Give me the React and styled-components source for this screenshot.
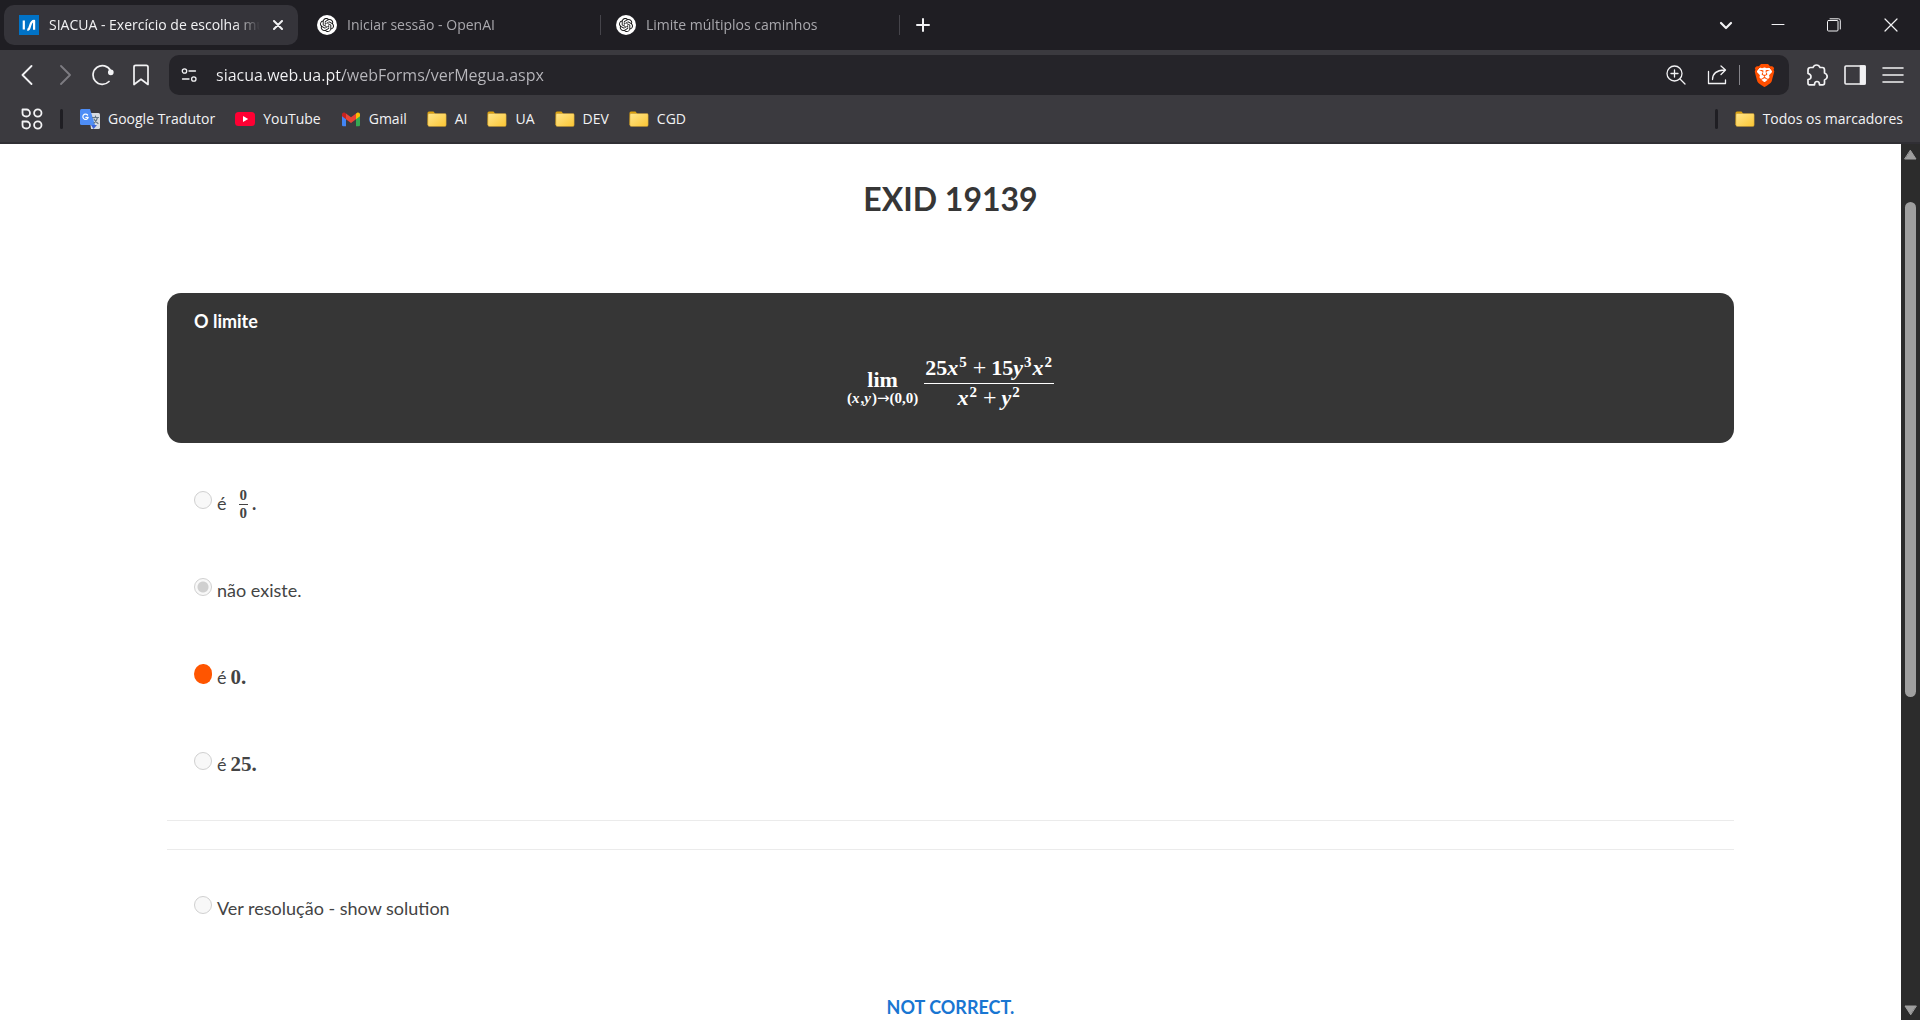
import React from "react";
import styled, { createGlobalStyle, css } from "styled-components";
import { SiOpenai, SiBrave } from "react-icons/si";

const GlobalStyle = createGlobalStyle`
  *, *::before, *::after { box-sizing: border-box; }
  html, body { margin: 0; background: #fff; }
  button { border: 0; padding: 0; background: none; color: inherit; font: inherit; }
  svg { display: block; flex: none; }
`;

const ui = `"Open Sans", "Noto Sans", sans-serif`;
const body = `"Lato", "Open Sans", sans-serif`;
const serif = `"Liberation Serif", "DejaVu Serif", serif`;

const Browser = styled.div`
  display: flex;
  flex-direction: column;
  height: 100vh;
  overflow: hidden;
  font-family: ${ui};
  font-size: 14px;
  color: #f2f2f4;
`;

/* Tab strip */
const TabStrip = styled.header`
  display: flex;
  align-items: center;
  flex: none;
  height: 50px;
  padding-left: 4px;
  background: #1f1e23;
`;
const Tab = styled.div`
  display: flex;
  align-items: center;
  gap: 10px;
  height: 40px;
  width: 299px;
  padding: 0 14px 0 15px;
  color: #a9a8ad;
  ${(p) =>
    p.$active &&
    css`
      width: 294px;
      margin-right: 4px;
      padding-right: 12px;
      background: #35343a;
      border-radius: 10px;
      color: #f2f2f4;
    `}
`;
const TabTitle = styled.span`
  flex: 1;
  min-width: 0;
  overflow: hidden;
  white-space: nowrap;
  padding-bottom: 2px;
  mask-image: linear-gradient(to right, #000 calc(100% - 26px), transparent);
`;
const TabDivider = styled.span`
  width: 1px;
  height: 20px;
  margin-left: -1px;
  background: #45444a;
`;
const Favicon = styled.span`
  display: grid;
  place-items: center;
  flex: none;
  width: 20px;
  height: 20px;
  border-radius: 50%;
  background: #fff;
  color: #111;
`;
const PlainButton = styled.button`
  display: grid;
  place-items: center;
  flex: none;
  width: ${(p) => p.$w || 38}px;
  height: 36px;
  color: ${(p) => (p.$dim ? "#7d7c82" : "#f2f2f4")};
`;
const WindowControls = styled.div`
  display: flex;
  margin-left: auto;
`;

/* Toolbar */
const Toolbar = styled.nav`
  display: flex;
  align-items: center;
  flex: none;
  height: 50px;
  padding: 0 8px;
  background: #3b3a3f;
`;
const AddressBar = styled.div`
  display: flex;
  align-items: center;
  flex: 1;
  height: 40px;
  margin: 0 9px;
  padding: 0 14px 0 8px;
  background: #252429;
  border-radius: 10px;
`;
const UrlInput = styled.input`
  flex: 1;
  min-width: 0;
  height: 28px;
  margin-left: 15px;
  padding: 0;
  border: 0;
  outline: 0;
  font-family: ${ui};
  font-size: 16px;
  color: transparent;
  background: linear-gradient(to right, #f4f4f6 127px, #b9b8bd 127px);
  background-clip: text;
`;
const BarDivider = styled.span`
  width: 1px;
  height: 20px;
  margin: 0 13px 0 6px;
  background: #85848a;
`;

/* Bookmarks */
const Bookmarks = styled.nav`
  display: flex;
  align-items: center;
  gap: 20px;
  flex: none;
  height: 44px;
  padding: 0 17px 5px 13px;
  background: #3b3a3f;
  border-bottom: 2px solid #302f34;
`;
const Bookmark = styled.a`
  display: flex;
  align-items: center;
  gap: 8px;
  color: #f2f2f4;
  text-decoration: none;
  white-space: nowrap;
`;
const BookmarkDivider = styled.span`
  width: 3px;
  height: 20px;
  margin-right: -3px;
  margin-left: ${(p) => (p.$end ? "auto" : "-11px")};
  border-radius: 2px;
  background: #1f1e23;
`;

/* Page */
const Viewport = styled.div`
  display: flex;
  flex: 1;
  min-height: 0;
  background: #fff;
`;
const Page = styled.main`
  flex: 1;
  min-width: 0;
  overflow: hidden;
  padding: 35px 167px 0;
  font-family: ${body};
  font-size: 18px;
  line-height: 24px;
  color: #444;
`;
const Heading = styled.h1`
  margin: 0 0 74px;
  text-align: center;
  font-size: 32px;
  line-height: 40px;
  font-weight: 700;
  color: #363636;
`;
const Card = styled.section`
  padding: 16px 27px 31px;
  border-radius: 14px;
  background: #363636;
  color: #fff;
  p { margin: 0; }
`;
const Formula = styled.div`
  display: flex;
  justify-content: center;
  gap: 6px;
  margin-top: 21px;
  font-family: ${serif};
  font-size: 22px;
`;
const Limit = styled.div`
  display: flex;
  flex-direction: column;
  align-items: center;
  padding-top: 14px;
  line-height: 24px;
`;
const Under = styled.span`
  display: flex;
  font-size: 15px;
  line-height: 12px;
  font-weight: 700;
  i { margin-right: 1px; }
`;
const Fraction = styled.div`
  display: flex;
  flex-direction: column;
  text-align: center;
  line-height: 28px;
  sup { font-size: 15px; line-height: 0; font-weight: 700; vertical-align: 8px; margin: 0 1px; }
  i { font-weight: 700; }
`;
const Operator = styled.span`
  margin: 0 5px;
  font-size: 24px;
  line-height: 0;
`;
const Arrow = styled.span`
  font-family: "DejaVu Sans", sans-serif;
  font-weight: 400;
`;
const Numerator = styled.div`
  padding: 0 1px;
  border-bottom: 1px solid currentColor;
  height: 30px;
`;
const Options = styled.div`
  padding: 16px 0 13px 27px;
`;
const Option = styled.div`
  display: flex;
  align-items: center;
  gap: 5px;
  height: 87px;
`;
const OptionLabel = styled.label`
  display: flex;
  align-items: center;
  gap: 4px;
`;
const Radio = styled.input`
  appearance: none;
  flex: none;
  width: 18px;
  height: 18px;
  margin: 0 0 5px;
  border: 1px solid #d0d0d0;
  border-radius: 50%;
  background: #f8f8f8;
  &:checked {
    background: radial-gradient(circle, #d0d0d0 5px, #f8f8f8 6px);
  }
  ${(p) =>
    p.$marked &&
    css`
      height: 20px;
      border: 0;
      border-radius: 50% 46% 45% 50%;
      background: #ff5500;
    `}
`;
const Num = styled.span`
  font-family: ${serif};
  font-size: 21px;
`;
const SmallFraction = styled.span`
  display: inline-grid;
  margin-left: 8px;
  padding-top: 4px;
  text-align: center;
  font-family: ${serif};
  font-weight: 700;
  font-size: 15px;
  line-height: 17px;
  span { padding: 0 1px; }
  span + span { border-top: 1px solid currentColor; }
`;
const Rule = styled.hr`
  height: 1px;
  margin: 0 0 28px;
  border: 0;
  background: #ebebeb;
`;
const Solution = styled.div`
  padding: 0 0 0 27px;
  margin-top: -14px;
`;
const Verdict = styled.p`
  margin: 46px 0 0;
  text-align: center;
  font-weight: 700;
  line-height: 20px;
  color: #1976d2;
`;

/* Scrollbar */
const Scrollbar = styled.div`
  display: flex;
  flex-direction: column;
  align-items: center;
  flex: none;
  width: 19px;
  padding: 5px 0 4px;
  background: #2c2c2c;
`;
const Track = styled.div`
  flex: 1;
  width: 11px;
  padding-top: 42px;
`;
const Thumb = styled.div`
  height: 61.6%;
  border-radius: 6px;
  background: #9f9f9f;
`;

const Svg = ({ w = 20, h, children, sw = 1.5, vb }) => (
  <svg width={w} height={h || w} viewBox={vb || `0 0 ${w} ${h || w}`} fill="none" stroke="currentColor" strokeWidth={sw} strokeLinecap="round" strokeLinejoin="round" aria-hidden="true">
    {children}
  </svg>
);

const SiteIcon = () => (
  <Svg w={20} sw={2.2}>
    <path d="M0 0h20v20H0z" fill="#0072c6" stroke="none" />
    <path d="M4.800 5.500v9M8.300 14.800c1.700 0 2-1 2.900-4.300s1.600-4.700 3.900-4.700v9" stroke="#fff" strokeLinecap="butt" />
  </Svg>
);
const FolderIcon = () => (
  <Svg w={20} sw={1}>
    <defs>
      <linearGradient id="folder" x1="0" y1="0" x2="1" y2="1">
        <stop offset="0" stopColor="#ffe68c" />
        <stop offset="1" stopColor="#fbc533" />
      </linearGradient>
    </defs>
    <path d="M.5 4Q.5 2.500 2 2.500h4.500L8.500 5H18v11H.5z" fill="#dda20d" stroke="none" />
    <path d="M1 5.500Q1 4.500 2 4.500h16q1.200 0 1.200 1.200V16q0 1.500-1.500 1.500h-15Q.8 17.500.8 16z" fill="url(#folder)" stroke="#b88a2a" strokeWidth=".4" />
  </Svg>
);
const TranslateIcon = () => (
  <Svg w={20} sw={1.2}>
    <path d="M9 4h9.500q1.500 0 1.500 1.500V18.500q0 1.500-1.500 1.500H11z" fill="#d7dbe0" stroke="none" />
    <path d="M11 16l2.500 4L17 16z" fill="#3a62d7" stroke="none" />
    <path d="M0 1.500Q0 0 1.500 0H10l5 16H1.500Q0 16 0 14.500z" fill="#4e8df6" stroke="none" />
    <path d="M7.600 6A2.700 2.700 0 1 0 8.200 8.300H5.800" stroke="#fff" />
    <path d="M12.500 8.500h6M15.500 7v1.500M17.500 8.500q-.8 3.500-3.500 5.500M14 10q1.500 3 4 4.500" stroke="#657786" />
  </Svg>
);
const YoutubeIcon = () => (
  <Svg w={20}>
    <rect y="3" width="20" height="14" rx="3.500" fill="#ff0033" stroke="none" />
    <path d="M8 7l5.200 3L8 13z" fill="#fff" stroke="none" />
  </Svg>
);
const GmailIcon = () => (
  <Svg w={20}>
    <g stroke="none">
      <path d="M1 5v11q0 1.300 1.300 1.300H5V8z" fill="#4285f4" />
      <path d="M19 5v11q0 1.300-1.300 1.300H15V8z" fill="#34a853" />
      <path d="M15 4.500l.8-.6C17.200 2.800 19 3.700 19 5.500V7.200l-4 3z" fill="#fbbc04" />
      <path d="M5 4.500l-.8-.6C2.800 2.800 1 3.700 1 5.500V7.200l4 3z" fill="#c5221f" />
      <path d="M5 4.500l5 3.800 5-3.800v5.700L10 14l-5-3.800z" fill="#ea4335" />
    </g>
  </Svg>
);
const BraveBadge = styled.span`
  display: grid;
  place-items: center;
  color: #ff4f00;
  background: radial-gradient(circle at 50% 45%, #fff 8px, transparent 8px);
`;
const BraveIcon = () => (
  <BraveBadge><SiBrave size={23} /></BraveBadge>
);

const links = [
  ["Google Tradutor", TranslateIcon],
  ["YouTube", YoutubeIcon],
  ["Gmail", GmailIcon],
  ["AI", FolderIcon],
  ["UA", FolderIcon],
  ["DEV", FolderIcon],
  ["CGD", FolderIcon],
];

const options = [
  {
    id: "a",
    label: (
      <>
        é
        <SmallFraction>
          <span>0</span>
          <span>0</span>
        </SmallFraction>
        <b>.</b>
      </>
    ),
  },
  { id: "b", label: "não existe.", checked: true },
  { id: "c", label: <>é <Num><b>0.</b></Num></>, marked: true },
  { id: "d", label: <>é <Num><b>25.</b></Num></> },
];

function Choice({ id, label, checked, marked }) {
  return (
    <Option>
      <Radio type="radio" name="answer" id={id} defaultChecked={checked} $marked={marked} />
      <OptionLabel htmlFor={id}>{label}</OptionLabel>
    </Option>
  );
}

export default function App() {
  return (
    <Browser>
      <GlobalStyle />
      <TabStrip>
        <Tab $active>
          <SiteIcon />
          <TabTitle>SIACUA - Exercício de escolha múltipla</TabTitle>
          <PlainButton $w={16} aria-label="Fechar separador">
            <Svg w={10} sw={2}><path d="M1 1l8 8M9 1l-8 8" /></Svg>
          </PlainButton>
        </Tab>
        <Tab>
          <Favicon><SiOpenai size={14} /></Favicon>
          <TabTitle>Iniciar sessão - OpenAI</TabTitle>
        </Tab>
        <TabDivider />
        <Tab>
          <Favicon><SiOpenai size={14} /></Favicon>
          <TabTitle>Limite múltiplos caminhos</TabTitle>
        </Tab>
        <TabDivider />
        <PlainButton $w={46} aria-label="Novo separador">
          <Svg w={14} sw={2}><path d="M7 1v12M1 7h12" /></Svg>
        </PlainButton>
        <WindowControls>
          <PlainButton $w={46} aria-label="Procurar separadores">
            <Svg w={14} sw={2.200}><path d="M2 5l5 5 5-5" /></Svg>
          </PlainButton>
          <PlainButton $w={57} aria-label="Minimizar">
            <Svg w={14} sw={1}><path d="M1 6.500h12" /></Svg>
          </PlainButton>
          <PlainButton $w={56} aria-label="Restaurar">
            <Svg w={14} sw={1}><rect x=".5" y="2.500" width="10.500" height="10.500" rx="1" /><path d="M3 .8h8.500q1.800 0 1.800 1.800V11" /></Svg>
          </PlainButton>
          <PlainButton $w={58} aria-label="Fechar">
            <Svg w={14} sw={1.200}><path d="M1 1l12 12M13 1L1 13" /></Svg>
          </PlainButton>
        </WindowControls>
      </TabStrip>

      <Toolbar>
        <PlainButton aria-label="Anterior"><Svg w={20} sw={1.800}><path d="M14.500 1l-9 9 9 9" /></Svg></PlainButton>
        <PlainButton $dim aria-label="Seguinte"><Svg w={20} sw={1.800}><path d="M6 1l9 9-9 9" /></Svg></PlainButton>
        <PlainButton aria-label="Recarregar">
          <Svg w={22} sw={1.700}><path d="M17 17.500A9.300 9.300 0 1 1 18.500 6.500" /><circle cx="18.800" cy="8.300" r="2" fill="currentColor" /></Svg>
        </PlainButton>
        <PlainButton aria-label="Marcar"><Svg w={22} sw={1.700}><path d="M4 3q0-1.700 1.700-1.700h10.600Q18 1.300 18 3v17.500l-7-5.200-7 5.200z" /></Svg></PlainButton>
        <AddressBar>
          <PlainButton $w={24} aria-label="Informações do site">
            <Svg w={18} sw={1.300}><circle cx="4.500" cy="5" r="2.200" /><path d="M9 5h6.500M2.500 13H9" /><circle cx="13.800" cy="13" r="2.200" /></Svg>
          </PlainButton>
          <UrlInput aria-label="Endereço" defaultValue="siacua.web.ua.pt/webForms/verMegua.aspx" />
          <PlainButton $w={50} aria-label="Zoom">
            <Svg w={20} sw={1.300}><circle cx="8.500" cy="8.500" r="7.500" /><path d="M14 14l5 5M5 8.500h7M8.500 5v7" /></Svg>
          </PlainButton>
          <PlainButton $w={32} aria-label="Partilhar">
            <Svg w={20} sw={1.300}><path d="M1.500 6.500v12h17v-3.500M5.500 14.500q0-9 12-9.500M14 1l4.500 4L14 9.500" /></Svg>
          </PlainButton>
          <BarDivider />
          <PlainButton $w={22} aria-label="Brave Shields"><BraveIcon /></PlainButton>
        </AddressBar>
        <PlainButton aria-label="Extensões">
          <Svg w={22} sw={1.700}>
            <path d="M2 6q0-2.500 2.500-2.500H7Q8 1 10.500 1T14 3.500h2.500Q18.500 3.500 18.500 6v3Q21.200 10 21.200 12.500T18.500 16v3q0 1.800-1.800 1.800H13.500C13.500 18.500 12.500 17.500 11 17.500S8.500 18.500 8.500 20.800H3.500Q2 20.800 2 19v-3.500C4 15.500 5 14.300 5 12.700S4 10 2 9.500z" />
          </Svg>
        </PlainButton>
        <PlainButton aria-label="Painel lateral">
          <Svg w={22} sw={1.600}><rect x="1" y="2" width="20" height="18" rx="1" /><path d="M16.500 2H21v18h-4.500z" fill="currentColor" /></Svg>
        </PlainButton>
        <PlainButton aria-label="Menu"><Svg w={22} sw={1.600}><path d="M1 4h20M1 11h20M1 18h20" /></Svg></PlainButton>
      </Toolbar>

      <Bookmarks>
        <PlainButton $w={38} aria-label="Aplicações">
          <Svg w={22} sw={1.800}>
            <path d="M1.500 1.500h4a3.400 3.400 0 0 1 0 7q-4 0-4-3.500z" />
            <circle cx="16.800" cy="5" r="3.700" />
            <path d="M1.500 13.500h4a3.400 3.400 0 0 1 0 7q-4 0-4-3.500z" />
            <circle cx="16.800" cy="17" r="3.700" />
          </Svg>
        </PlainButton>
        <BookmarkDivider />
        {links.map(([name, Icon]) => (
          <Bookmark href="#" key={name}><Icon />{name}</Bookmark>
        ))}
        <BookmarkDivider $end />
        <Bookmark href="#"><FolderIcon />Todos os marcadores</Bookmark>
      </Bookmarks>

      <Viewport>
        <Page>
          <Heading>EXID 19139</Heading>
          <Card>
            <p><b>O limite</b></p>
            <Formula>
              <Limit>
                <b>lim</b>
                <Under>(<i>x</i>,<i>y</i>)<Arrow>→</Arrow>(0,0)</Under>
              </Limit>
              <Fraction>
                <Numerator><b>25</b><i>x</i><sup>5</sup><Operator>+</Operator><b>15</b><i>y</i><sup>3</sup><i>x</i><sup>2</sup></Numerator>
                <div><i>x</i><sup>2</sup><Operator>+</Operator><i>y</i><sup>2</sup></div>
              </Fraction>
            </Formula>
          </Card>
          <Options>
            {options.map((o) => <Choice key={o.id} {...o} />)}
          </Options>
          <Rule />
          <Rule />
          <Solution>
            <Choice id="solution" label="Ver resolução - show solution" />
          </Solution>
          <Verdict>NOT CORRECT.</Verdict>
        </Page>
        <Scrollbar aria-hidden="true">
          <Svg w={13} h={11}><path d="M6.500 1.500L12 10H1z" fill="#9f9f9f" stroke="#9f9f9f" strokeWidth="1" /></Svg>
          <Track><Thumb /></Track>
          <Svg w={13} h={11}><path d="M6.500 9.500L1 1h11z" fill="#9f9f9f" stroke="#9f9f9f" strokeWidth="1" /></Svg>
        </Scrollbar>
      </Viewport>
    </Browser>
  );
}
